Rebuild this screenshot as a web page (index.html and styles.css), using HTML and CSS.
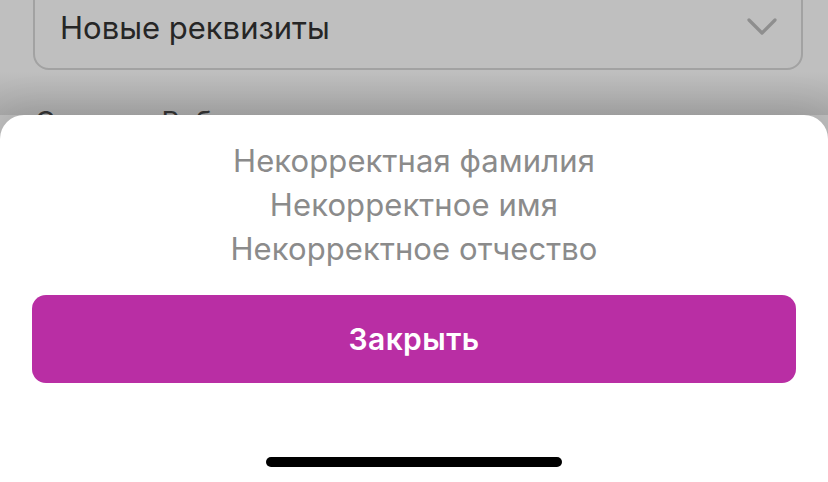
FILE: index.html
```html
<!DOCTYPE html>
<html lang="ru">
<head>
<meta charset="utf-8">
<link rel="stylesheet" href="styles.css">
</head>
<body>
<div class="screen">
  <div class="backdrop">
    <div class="field">
      <span class="field-text">Новые реквизиты</span>
      <svg class="chevron" width="30" height="18" viewBox="0 0 30 18"><path d="M2 2 L15 15 L28 2" fill="none" stroke="#8e8e8e" stroke-width="3.2" stroke-linecap="round" stroke-linejoin="round"/></svg>
    </div>
    <div class="label">Сумма в Рублях</div>
  </div>
  <div class="sheet">
    <div class="errors">
      <div>Некорректная фамилия</div>
      <div>Некорректное имя</div>
      <div>Некорректное отчество</div>
    </div>
    <button class="close">Закрыть</button>
    <div class="home"></div>
  </div>
</div>
</body>
</html>
```
FILE: styles.css
```css
html, body {
  margin: 0;
  padding: 0;
}
body {
  width: 828px;
  height: 482px;
  overflow: hidden;
  background: #bebebe;
  font-family: "Inter", "Noto Sans", sans-serif;
}
.screen {
  display: flex;
  flex-direction: column;
  height: 482px;
  background: #bebebe;
}
.backdrop {
  height: 115px;
  overflow: hidden;
  flex: none;
  background: linear-gradient(to bottom, #bfbfbf 0, #bfbfbf 62%, #a9a9a9 100%);
}
.field {
  box-sizing: border-box;
  margin: -32px 25px 0 33px;
  height: 102px;
  border: 2px solid #a2a2a2;
  border-radius: 16px;
  padding: 40px 24px 0 25px;
  display: flex;
  align-items: flex-start;
  justify-content: space-between;
}
.field-text {
  font-size: 31px;
  line-height: 36px;
  color: #262626;
  letter-spacing: 0;
}
.chevron {
  margin-top: 8px;
}
.label {
  margin: 34px 0 0 35px;
  font-size: 28px;
  line-height: 36px;
  color: #333;
}
.sheet {
  flex: 1;
  background: #fff;
  border-radius: 24px 24px 0 0;
  padding-top: 24px;
  display: flex;
  flex-direction: column;
  align-items: center;
  box-shadow: 0 -8px 36px rgba(0, 0, 0, 0.10);
}
.errors {
  text-align: center;
  font-size: 31px;
  line-height: 44px;
  color: #8b8b8b;
  letter-spacing: 0.1px;
}
.close {
  box-sizing: border-box;
  margin-top: 24px;
  width: 764px;
  height: 88px;
  border: none;
  border-radius: 14px;
  background: #b92ea4;
  color: #fff;
  font-family: inherit;
  font-size: 30px;
  font-weight: 600;
  letter-spacing: 0.4px;
  align-self: flex-start;
  margin-left: 32px;
}
.home {
  margin-top: 74px;
  width: 296px;
  height: 10px;
  border-radius: 5px;
  background: #000;
}
```
